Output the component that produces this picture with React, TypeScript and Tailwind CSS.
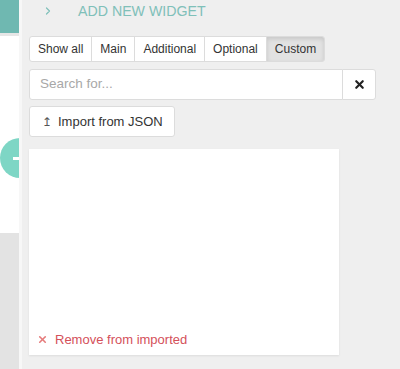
import { X, ChevronRight } from "lucide-react";

const tabs = ["Show all", "Main", "Additional", "Optional", "Custom"];

export default function App() {
  const active = "Custom";

  return (
    <div
      className="relative flex h-[369px] w-[400px] overflow-hidden bg-[#efefef]"
      style={{ fontFamily: '"Liberation Sans", Arial, sans-serif' }}
    >
      {/* page behind the panel */}
      <div className="flex w-[19px] shrink-0 flex-col">
        <div className="h-[33px] bg-[#6fb8b1]" />
        <div className="h-[3px] bg-[#e6e6e6]" />
        <div className="h-[197px] bg-white" />
        <div className="flex-1 bg-[#e3e3e3]" />
      </div>
      <div className="absolute left-0 top-[138px] flex h-[40px] w-[40px] items-center justify-center rounded-full bg-[#7ed6c5]">
        <div className="h-[3px] w-[14px] bg-white" />
      </div>

      {/* widget panel */}
      <div className="relative z-10 flex flex-1 flex-col border-l-[3px] border-[#f7f7f7] bg-[#efefef] pl-[7px]">
        <div className="flex h-[24px] items-center text-[#7fc0b9]">
          <ChevronRight size={12} strokeWidth={2.4} className="ml-[13px] mr-[24px] -mt-[3px]" />
          <span className="text-[14.2px]">ADD NEW WIDGET</span>
        </div>

        <div className="mt-[12px] flex h-[26px] w-fit">
          {tabs.map((t, i) => (
            <button
              key={t}
              className={`border border-[#dcdcdc] px-[8px] text-[12px] text-[#333] ${
                i > 0 ? "-ml-px" : ""
              } ${i === 0 ? "rounded-l-[3px]" : ""} ${i === tabs.length - 1 ? "rounded-r-[3px]" : ""} ${
                t === active ? "bg-[#e2e2e2] border-[#c8c8c8] shadow-[inset_0_2px_4px_rgba(0,0,0,0.12)]" : "bg-white"
              }`}
            >
              {t}
            </button>
          ))}
        </div>

        <div className="mt-[7px] flex h-[31px] w-[347px]">
          <input
            placeholder="Search for..."
            className="flex-1 rounded-l-[3px] border border-[#dcdcdc] bg-white px-[10px] text-[13.5px] text-[#333] placeholder:text-[#a8a8a8] outline-none"
          />
          <button className="-ml-px flex w-[34px] items-center justify-center rounded-r-[3px] border border-[#dcdcdc] bg-white text-[#222]">
            <X size={13} strokeWidth={4} />
          </button>
        </div>

        <div className="mt-[6px]">
          <button className="flex h-[31px] items-center gap-[6px] rounded-[3px] border border-[#dcdcdc] bg-white pl-[12px] pr-[11px] text-[13px] text-[#333]">
            <span className="text-[12px] text-[#555]">&#x21a5;</span>
            Import from JSON
          </button>
        </div>

        <div className="mt-[12px] flex h-[206px] w-[310px] flex-col justify-end bg-white pb-[6px] pl-[8px] shadow-[0_1px_2px_rgba(0,0,0,0.08)]">
          <div className="flex items-center text-[13px] text-[#d4505a]">
            <X size={11} strokeWidth={3.5} className="mr-[7px] text-[#e57b7b]" />
            Remove from imported
          </div>
        </div>
      </div>
    </div>
  );
}
